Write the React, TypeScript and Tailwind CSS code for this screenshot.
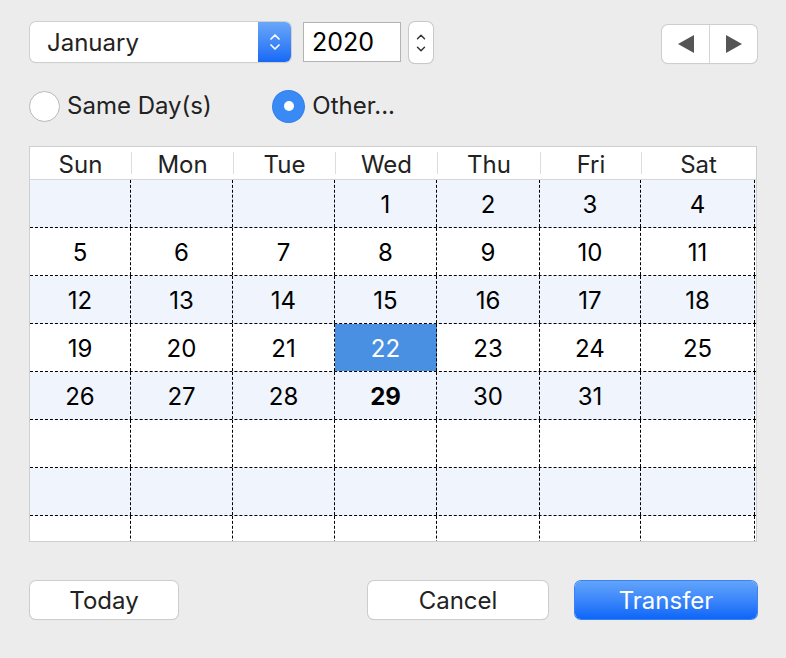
import { ChevronDown, ChevronUp } from "lucide-react";

const days = ["Sun", "Mon", "Tue", "Wed", "Thu", "Fri", "Sat"];
const widths = ["w-[101px]", "w-[102px]", "w-[102px]", "w-[102px]", "w-[103px]", "w-[101px]", "w-[114px]"];

// January 2020 starts on Wednesday
const cells: (number | null)[] = [];
for (let i = 0; i < 3; i++) cells.push(null);
for (let d = 1; d <= 31; d++) cells.push(d);
while (cells.length < 56) cells.push(null);
const rows: (number | null)[][] = [];
for (let r = 0; r < 8; r++) rows.push(cells.slice(r * 7, r * 7 + 7));

function Radio({ on }: { on?: boolean }) {
  if (on) {
    return (
      <span className="flex h-[31px] w-[31px] items-center justify-center rounded-full bg-[#3a8af6] shadow-[0_0_0_1px_#2f7ff0]">
        <span className="h-[10px] w-[10px] rounded-full bg-white" />
      </span>
    );
  }
  return <span className="h-[31px] w-[31px] rounded-full border border-[#b9b9b9] bg-white" />;
}

export default function App() {
  return (
    <div
      className="h-[658px] w-[786px] bg-[#ececec] text-[24px] text-[#222]"
      style={{ fontFamily: "Inter, 'Liberation Sans', sans-serif" }}
    >
      <div className="flex items-start pl-[30px] pr-[29px] pt-[22px]">
        <div className="flex h-[40px] w-[261px] overflow-hidden rounded-[6px] bg-white shadow-[0_0_0_1px_#cfcfcf,0_1px_1px_rgba(0,0,0,0.15)]">
          <span className="flex flex-1 items-center pl-[17px] pt-[2px]">January</span>
          <span className="flex w-[33px] flex-col items-center justify-center bg-gradient-to-b from-[#6aa7f8] to-[#1568f6] text-white">
            <ChevronUp size={16} strokeWidth={2.5} className="-mb-[3px]" />
            <ChevronDown size={16} strokeWidth={2.5} className="-mt-[3px]" />
          </span>
        </div>
        <div className="ml-[12px] flex h-[40px] w-[98px] items-center border border-[#b3b3b3] bg-white pl-[8px] pt-[2px] text-[25px] text-black">
          2020
        </div>
        <div className="ml-[8px] flex h-[41px] w-[24px] flex-col items-center justify-center rounded-[6px] bg-white text-[#333] shadow-[0_0_0_1px_#c8c8c8,0_1px_1px_rgba(0,0,0,0.12)]">
          <ChevronUp size={14} strokeWidth={2.5} className="-mb-[1px]" />
          <ChevronDown size={14} strokeWidth={2.5} className="-mt-[1px]" />
        </div>
        <div className="ml-auto mt-[3px] flex h-[38px] w-[95px] rounded-[6px] bg-white shadow-[0_0_0_1px_#cdcdcd,0_1px_1px_rgba(0,0,0,0.12)]">
          <span className="flex flex-1 items-center justify-center border-r border-[#d4d4d4]">
            <svg width="22" height="22" viewBox="0 0 22 22">
              <polygon points="3,11 19,2 19,20" fill="#555" />
            </svg>
          </span>
          <span className="flex flex-1 items-center justify-center">
            <svg width="22" height="22" viewBox="0 0 22 22">
              <polygon points="19,11 3,2 3,20" fill="#555" />
            </svg>
          </span>
        </div>
      </div>

      <div className="mt-[25px] flex items-center pl-[29px]">
        <Radio />
        <span className="ml-[7px]">Same Day(s)</span>
        <span className="ml-auto">
          <Radio on />
        </span>
        <span className="ml-[8px] mr-[391px]">Other...</span>
      </div>

      <div className="ml-[29px] mt-[22px] h-[396px] w-[728px] overflow-hidden border border-[#cfcfcf] bg-white">
        <div className="flex h-[33px] border-b border-[#d6d6d6] bg-white">
          {days.map((d, i) => (
            <div key={d} className={`${widths[i]} flex items-center justify-center`}>
              <span
                className={`flex h-[22px] w-full items-center justify-center pt-[3px] ${i > 0 ? "border-l border-[#dcdcdc]" : ""}`}
              >
                {d}
              </span>
            </div>
          ))}
        </div>
        {rows.map((row, r) => (
          <div
            key={r}
            className={`flex h-[48px] shrink-0 border-b border-dashed border-black ${r % 2 === 0 ? "bg-[#eff4fd]" : "bg-white"}`}
          >
            {row.map((d, c) => (
              <div
                key={c}
                className={`${widths[c]} flex items-center justify-center border-r border-dashed border-black pt-[3px] text-black ${
                  d === 22 ? "bg-[#4a90e2] text-white" : ""
                } ${d === 29 ? "font-bold" : ""}`}
              >
                {d ?? ""}
              </div>
            ))}
          </div>
        ))}
      </div>

      <div className="mt-[39px] flex pl-[30px] pr-[29px]">
        <button className="h-[38px] w-[148px] rounded-[6px] bg-white pt-[2px] shadow-[0_0_0_1px_#cdcdcd,0_1px_1px_rgba(0,0,0,0.15)]">
          Today
        </button>
        <button className="ml-auto h-[38px] w-[180px] rounded-[6px] bg-white pt-[2px] shadow-[0_0_0_1px_#cdcdcd,0_1px_1px_rgba(0,0,0,0.15)]">
          Cancel
        </button>
        <button className="ml-[27px] h-[38px] w-[182px] rounded-[6px] bg-gradient-to-b from-[#62a4fb] to-[#0a65f8] pt-[2px] text-white shadow-[0_0_0_1px_#3b82f6]">
          Transfer
        </button>
      </div>
    </div>
  );
}
